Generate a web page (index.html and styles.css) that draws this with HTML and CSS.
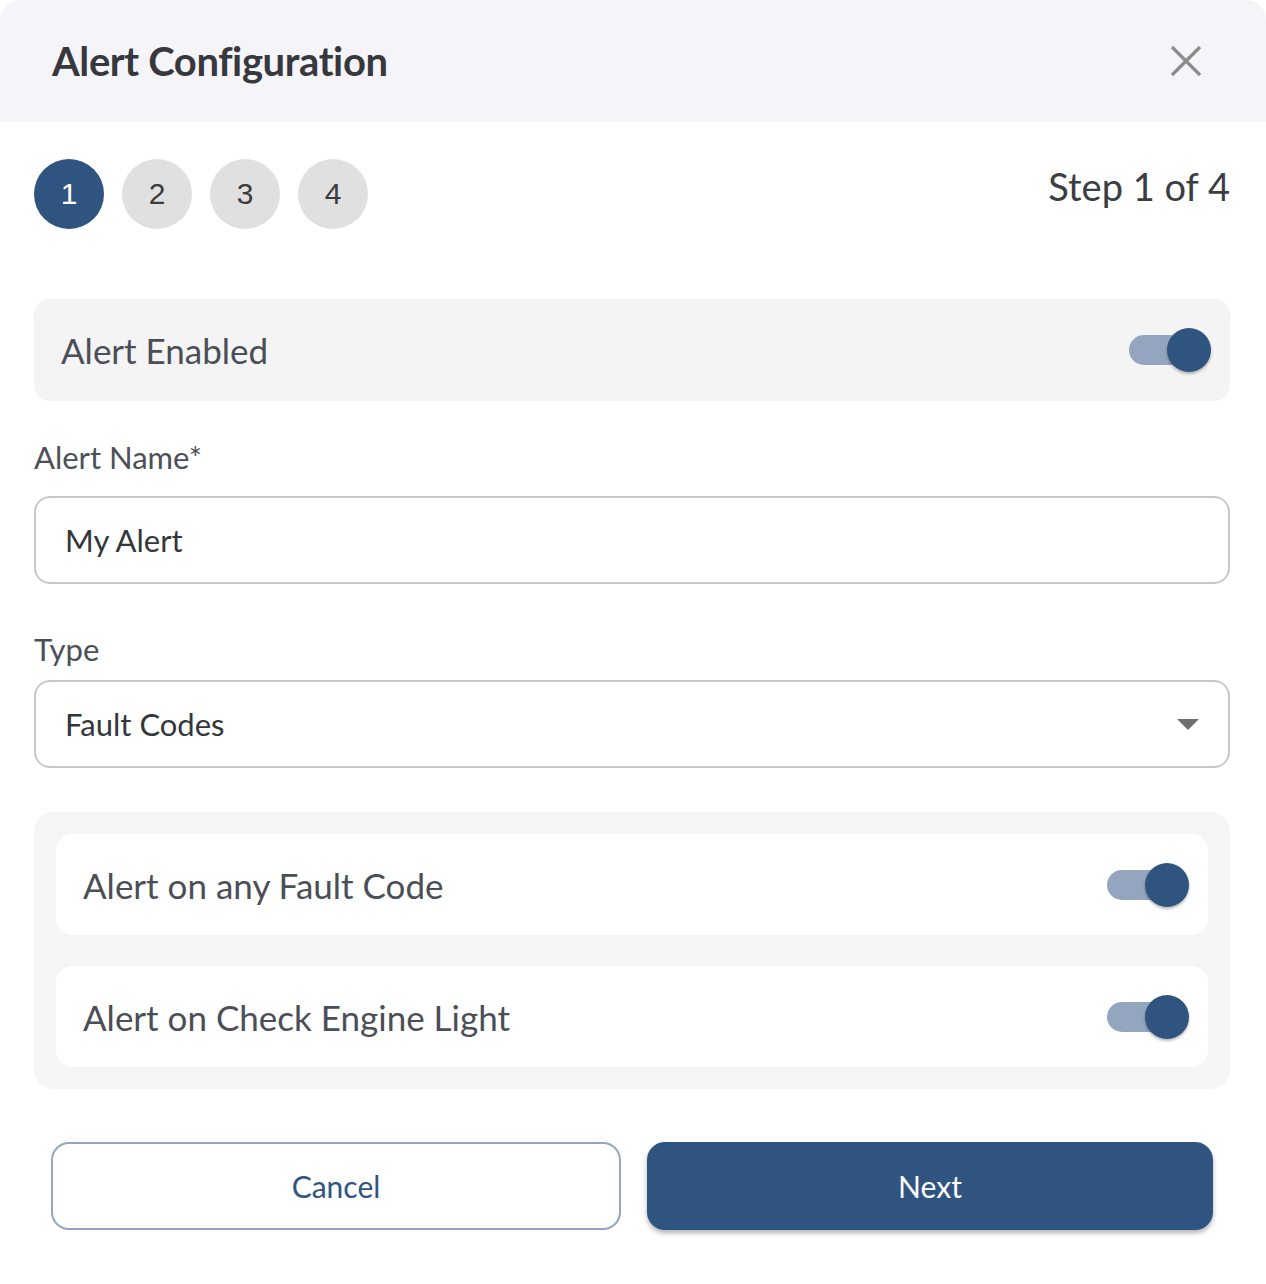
FILE: index.html
```html
<!DOCTYPE html>
<html>
<head>
<meta charset="utf-8">
<link rel="stylesheet" href="styles.css">
</head>
<body>
<div class="dialog">
  <header class="dialog-header">
    <h1 class="title">Alert Configuration</h1>
    <button class="close" aria-label="Close">
      <svg width="34" height="34" viewBox="0 0 34 34"><path d="M3 3 L31 31 M31 3 L3 31" stroke="#8c8c8c" stroke-width="3.2" fill="none"/></svg>
    </button>
  </header>
  <main class="dialog-body">
    <div class="steps-row">
      <div class="steps">
        <span class="step active">1</span>
        <span class="step">2</span>
        <span class="step">3</span>
        <span class="step">4</span>
      </div>
      <div class="step-count">Step 1 of 4</div>
    </div>

    <div class="panel enabled-panel">
      <span class="panel-label">Alert Enabled</span>
      <span class="switch"><span class="track"></span><span class="thumb"></span></span>
    </div>

    <label class="field-label name-label">Alert Name*</label>
    <div class="input">My Alert</div>

    <label class="field-label type-label">Type</label>
    <div class="input select">
      <span>Fault Codes</span>
      <span class="caret"></span>
    </div>

    <div class="group">
      <div class="group-item">
        <span class="panel-label">Alert on any Fault Code</span>
        <span class="switch"><span class="track"></span><span class="thumb"></span></span>
      </div>
      <div class="group-item">
        <span class="panel-label">Alert on Check Engine Light</span>
        <span class="switch"><span class="track"></span><span class="thumb"></span></span>
      </div>
    </div>

    <div class="actions">
      <button class="btn btn-outline">Cancel</button>
      <button class="btn btn-primary">Next</button>
    </div>
  </main>
</div>
</body>
</html>
```

FILE: styles.css
```css
* { box-sizing: border-box; }
html, body { margin: 0; padding: 0; background: #ffffff; }
body { font-family: Lato, "Open Sans", sans-serif; color: #3a3d42; }

.dialog { width: 1266px; background: #fff; }

.dialog-header {
  height: 122px;
  background: #f5f5f9;
  border-radius: 20px 20px 0 0;
  display: flex;
  align-items: center;
  justify-content: space-between;
  padding: 0 63px 0 52px;
}
.title {
  margin: 0;
  font-size: 40px;
  font-weight: 700;
  color: #36383d;
  letter-spacing: -0.4px;
  line-height: 1;
}
.close {
  border: 0; background: transparent; padding: 0;
  width: 34px; height: 34px;
  display: flex;
}

.dialog-body { padding: 37px 36px 40px 34px; }

.steps-row { display: flex; justify-content: space-between; align-items: flex-start; }
.steps { display: flex; gap: 18px; }
.step {
  width: 70px; height: 70px; border-radius: 50%;
  background: #e0e0e0;
  color: #3c3c3c;
  font-family: "Liberation Sans", Arial, sans-serif;
  font-size: 30px;
  display: flex; align-items: center; justify-content: center;
}
.step.active { background: #2f5480; color: #fff; }
.step-count {
  font-size: 38px;
  color: #3a3d42;
  line-height: 1;
  margin-top: 8px;
  margin-right: 0;
}

.panel {
  margin-top: 70px;
  height: 102px;
  background: #f4f4f4;
  border-radius: 16px;
  display: flex; align-items: center; justify-content: space-between;
  padding: 0 19px 0 27px;
}
.panel-label { font-size: 35px; color: #4a4e56; }

.switch { position: relative; width: 82px; height: 44px; display: block; }
.track {
  position: absolute; left: 0; top: 7px;
  width: 68px; height: 30px; border-radius: 15px;
  background: #94a6bf;
}
.thumb {
  position: absolute; right: 0; top: 0;
  width: 44px; height: 44px; border-radius: 50%;
  background: #2f5480;
  box-shadow: 0 2px 3px rgba(0,0,0,0.28);
}

.field-label { display: block; font-size: 31px; color: #4b5058; line-height: 1; }
.name-label { margin-top: 41px; }
.type-label { margin-top: 50px; }

.input {
  margin-top: 23px;
  height: 88px;
  border: 2px solid #c8c8c8;
  border-radius: 16px;
  display: flex; align-items: center;
  padding: 0 29px;
  font-size: 31px;
  color: #33363b;
}
.type-label + .input { margin-top: 15px; }
.select { justify-content: space-between; padding-right: 29px; }
.caret {
  width: 0; height: 0;
  border-left: 11px solid transparent;
  border-right: 11px solid transparent;
  border-top: 11px solid #707070;
}

.group {
  margin-top: 44px;
  background: #f5f5f5;
  border-radius: 20px;
  padding: 22px;
  display: flex; flex-direction: column; gap: 31px;
}
.group-item {
  height: 101px;
  background: #fff;
  border-radius: 16px;
  display: flex; align-items: center; justify-content: space-between;
  padding: 0 19px 0 27px;
}

.actions {
  margin-top: 53px;
  padding: 0 17px;
  display: flex; gap: 26px;
}
.btn {
  flex: 1;
  height: 88px;
  border-radius: 18px;
  font-family: Lato, sans-serif;
  font-size: 30px;
  cursor: pointer;
}
.btn-outline { background: #fff; border: 2px solid #94a6bf; color: #2f5480; }
.btn-primary {
  background: #2f5480; border: 0; color: #fff;
  box-shadow: 0 3px 5px rgba(0,0,0,0.3);
}
```
